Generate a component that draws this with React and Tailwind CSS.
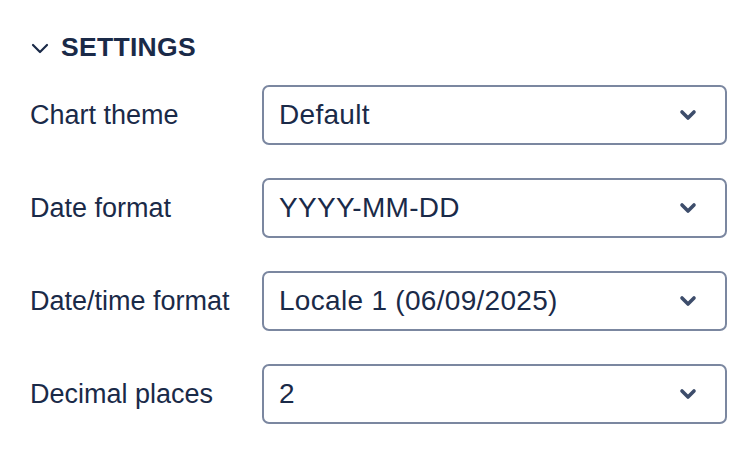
import React from "react";

const rows = [
  { label: "Chart theme", value: "Default" },
  { label: "Date format", value: "YYYY-MM-DD" },
  { label: "Date/time format", value: "Locale 1 (06/09/2025)" },
  { label: "Decimal places", value: "2" },
];

function Chevron() {
  return (
    <svg width="18" height="12" viewBox="0 0 18 12" fill="none">
      <path d="M3 3 L9 9 L15 3" stroke="#3d4d6b" strokeWidth="3.6" strokeLinecap="round" strokeLinejoin="round" />
    </svg>
  );
}

export default function App() {
  return (
    <div
      className="w-[750px] h-[451px] bg-white text-[#1a2a48] pl-[30px] pt-[28px]"
      style={{ fontFamily: '"Liberation Sans", Arial, sans-serif' }}
    >
      <div className="flex items-center h-[40px] mb-[17px]">
        <svg width="18" height="12" viewBox="0 0 18 12" fill="none" className="ml-[1px] mr-[12px]">
          <path d="M2 3 L9 10 L16 3" stroke="#1a2a48" strokeWidth="2.2" strokeLinecap="round" strokeLinejoin="round" />
        </svg>
        <span className="text-[26.5px] font-bold tracking-[0.3px]">SETTINGS</span>
      </div>
      <div className="flex flex-col gap-[33px]">
        {rows.map((r) => (
          <div key={r.label} className="flex items-center h-[60px]">
            <div className="w-[232px] text-[27px]">{r.label}</div>
            <div className="w-[465px] h-[60px] border-2 border-[#7b87a0] rounded-[7px] flex items-center justify-between pl-[15px] pr-[28px]">
              <span className="text-[28px] tracking-[0.3px]">{r.value}</span>
              <Chevron />
            </div>
          </div>
        ))}
      </div>
    </div>
  );
}
